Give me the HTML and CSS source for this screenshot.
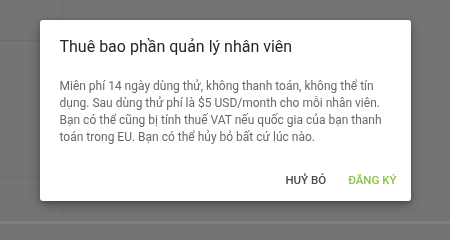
FILE: index.html
```html
<!DOCTYPE html>
<html lang="vi">
<head>
<meta charset="utf-8">
<link rel="stylesheet" href="styles.css">
</head>
<body>
<div class="page">
  <div class="sidebar">
    <div class="row row-top"></div>
    <div class="row row-mid"></div>
    <div class="row"></div>
  </div>
  <div class="main"></div>
</div>
<div class="strip"></div>
<div class="overlay">
  <div class="dialog">
    <h1 class="title">Thuê bao phần quản lý nhân viên</h1>
    <p class="text">Miên phí 14 ngày dùng thử, không thanh toán, không thể tín dụng. Sau dùng thử phí là $5 USD/month cho mỗi nhân viên. Bạn có thể cũng bị tính thuế VAT nếu quốc gia của bạn thanh toán trong EU. Bạn có thể hủy bỏ bất cứ lúc nào.</p>
    <div class="actions">
      <button class="btn btn-cancel">HUỶ BỎ</button>
      <button class="btn btn-ok">ĐĂNG KÝ</button>
    </div>
  </div>
</div>
</body>
</html>
```
FILE: styles.css
```css
html, body {
  margin: 0;
  padding: 0;
  width: 450px;
  height: 224px;
  overflow: hidden;
  background: #747474;
  font-family: Roboto, "Noto Sans", sans-serif;
}
.page {
  display: flex;
  height: 221px;
}
.sidebar {
  width: 62px;
  border-right: 1px solid #6d6d6d;
  display: flex;
  flex-direction: column;
}
.row {
  flex: 1;
}
.row-top {
  flex: 0 0 40px;
  border-bottom: 1px solid #6d6d6d;
}
.row-mid {
  flex: 0 0 136px;
  border-bottom: 1px solid #6d6d6d;
}
.main {
  flex: 1;
}
.strip {
  height: 3px;
  background: #7e7e7e;
}
.overlay {
  position: fixed;
  inset: 0;
  display: flex;
  align-items: flex-start;
  justify-content: center;
  padding-top: 20px;
}
.dialog {
  width: 371px;
  height: 181px;
  box-sizing: border-box;
  background: #fff;
  border-radius: 3px;
  box-shadow: 0 4px 12px rgba(0,0,0,0.28), 0 2px 4px rgba(0,0,0,0.2);
  padding: 17px 20px 0 20px;
  display: flex;
  flex-direction: column;
}
.title {
  margin: 0;
  font-size: 16px;
  font-weight: 400;
  line-height: 19px;
  color: #262626;
}
.text {
  margin: 22px 0 0 0;
  font-size: 12px;
  line-height: 17px;
  color: #686868;
}
.actions {
  margin-top: auto;
  margin-right: -14px;
  display: flex;
  justify-content: flex-end;
  gap: 6px;
  padding-bottom: 3px;
}
.btn {
  border: 0;
  background: transparent;
  font-family: Roboto, "Noto Sans", sans-serif;
  font-size: 11.5px;
  font-weight: 500;
  padding: 0 8px;
  height: 36px;
  line-height: 36px;
}
.btn-cancel {
  color: #4a4a4a;
}
.btn-ok {
  color: #8bc34a;
}
```
